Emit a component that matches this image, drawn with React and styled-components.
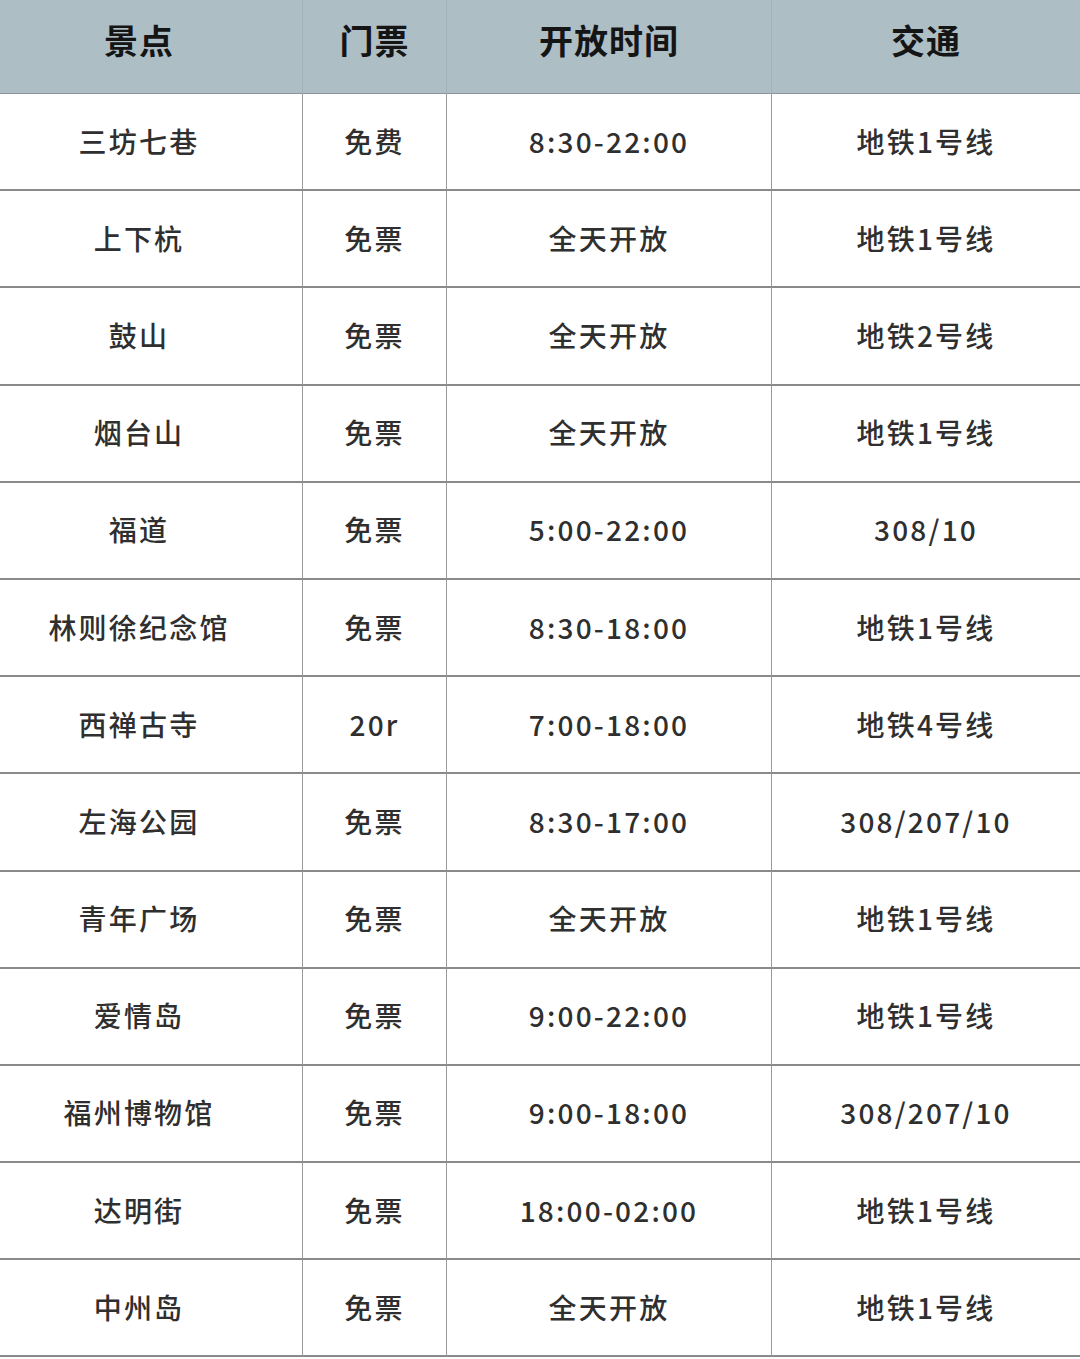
import styled, { createGlobalStyle } from "styled-components";

const GlobalStyle = createGlobalStyle`
  html, body {
    margin: 0;
    padding: 0;
    background: #ffffff;
  }
  body {
    font-family: "Noto Sans CJK SC", "Noto Sans", sans-serif;
  }
`;

const rows = [
  ["三坊七巷", "免费", "8:30-22:00", "地铁1号线"],
  ["上下杭", "免票", "全天开放", "地铁1号线"],
  ["鼓山", "免票", "全天开放", "地铁2号线"],
  ["烟台山", "免票", "全天开放", "地铁1号线"],
  ["福道", "免票", "5:00-22:00", "308/10"],
  ["林则徐纪念馆", "免票", "8:30-18:00", "地铁1号线"],
  ["西禅古寺", "20r", "7:00-18:00", "地铁4号线"],
  ["左海公园", "免票", "8:30-17:00", "308/207/10"],
  ["青年广场", "免票", "全天开放", "地铁1号线"],
  ["爱情岛", "免票", "9:00-22:00", "地铁1号线"],
  ["福州博物馆", "免票", "9:00-18:00", "308/207/10"],
  ["达明街", "免票", "18:00-02:00", "地铁1号线"],
  ["中州岛", "免票", "全天开放", "地铁1号线"],
];

const headers = ["景点", "门票", "开放时间", "交通"];

const Table = styled.div`
  width: 1080px;
  display: grid;
  grid-template-columns: 302px 144px 325px 1fr;
`;

const HeadCell = styled.div`
  height: 94px;
  background: #adbec5;
  display: flex;
  align-items: center;
  justify-content: center;
  padding-bottom: 14px;
  padding-right: ${({ first }) => (first ? "24px" : "0")};
  box-sizing: border-box;
  font-size: 34px;
  font-weight: 700;
  color: #151515;
  letter-spacing: 1px;
  border-left: ${({ first }) => (first ? "none" : "1px solid #a3b3ba")};
  border-bottom: 1px solid #8c9599;
`;

const Cell = styled.div`
  height: 97.2px;
  box-sizing: border-box;
  display: flex;
  align-items: center;
  justify-content: center;
  font-size: 28px;
  font-weight: 500;
  color: #2f2f2f;
  letter-spacing: 2.2px;
  border-left: ${({ first }) => (first ? "none" : "1px solid #9a9a9a")};
  border-bottom: 2px solid #8a8a8a;
  padding-right: ${({ first }) => (first ? "24px" : "0")};
  padding-bottom: 2px;
`;

export default function App() {
  return (
    <>
      <GlobalStyle />
      <Table>
        {headers.map((h, i) => (
          <HeadCell key={h} first={i === 0}>
            {h}
          </HeadCell>
        ))}
        {rows.map((r, ri) =>
          r.map((c, ci) => (
            <Cell key={ri + "-" + ci} first={ci === 0}>
              {c}
            </Cell>
          ))
        )}
      </Table>
    </>
  );
}
